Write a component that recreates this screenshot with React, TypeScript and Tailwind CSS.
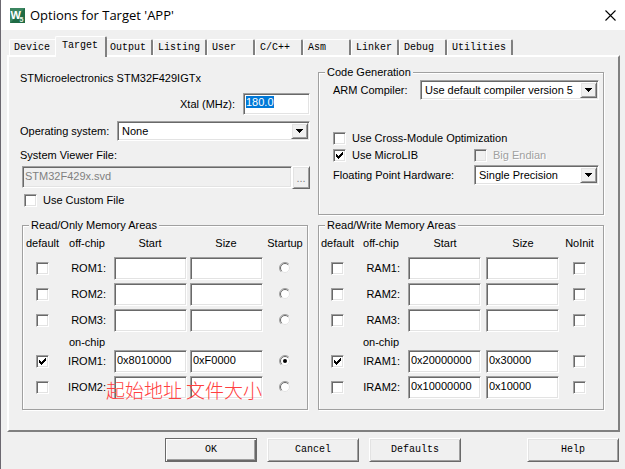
import { useEffect, useRef } from 'react';
import type { InputHTMLAttributes, ReactNode } from 'react';

const SUNKEN =
  'border border-t-[#a0a0a0] border-l-[#a0a0a0] border-r-white border-b-white shadow-[inset_1px_1px_0_#696969,inset_-1px_-1px_0_#e3e3e3]';
const RAISED =
  'border border-t-white border-l-white border-r-[#696969] border-b-[#696969] shadow-[inset_1px_1px_0_#e3e3e3,inset_-1px_-1px_0_#a0a0a0]';
const MONO = "font-['Liberation_Mono',monospace] text-[10px]";

const TABS = ['Device', 'Target', 'Output', 'Listing', 'User', 'C/C++', 'Asm', 'Linker', 'Debug', 'Utilities'];

type MemoryRow = {
  name: string;
  start?: string;
  size?: string;
  enabled?: boolean;
  startup?: boolean;
  notes?: string[];
};

const ROM_OFF: MemoryRow[] = [{ name: 'ROM1' }, { name: 'ROM2' }, { name: 'ROM3' }];
const ROM_ON: MemoryRow[] = [
  { name: 'IROM1', start: '0x8010000', size: '0xF0000', enabled: true, startup: true },
  { name: 'IROM2', notes: ['起始地址', '文件大小'] },
];
const RAM_OFF: MemoryRow[] = [{ name: 'RAM1' }, { name: 'RAM2' }, { name: 'RAM3' }];
const RAM_ON: MemoryRow[] = [
  { name: 'IRAM1', start: '0x20000000', size: '0x30000', enabled: true },
  { name: 'IRAM2', start: '0x10000000', size: '0x10000' },
];

function Checkbox(props: InputHTMLAttributes<HTMLInputElement>) {
  return (
    <span className="relative inline-block h-[13px] w-[13px] shrink-0 align-middle">
      <input
        type="checkbox"
        {...props}
        className={`peer block h-[13px] w-[13px] appearance-none bg-white disabled:bg-[#f0f0f0] ${SUNKEN}`}
      />
      <svg
        viewBox="0 0 13 13"
        className="pointer-events-none absolute inset-0 hidden h-[13px] w-[13px] peer-checked:block"
        shapeRendering="crispEdges"
      >
        <path d="M3 5h1v1h1v1h1v-1h1v-1h1v-1h1v-1h1v3h-1v1h-1v1h-1v1h-1v1h-1v-1h-1v-1h-1z" />
      </svg>
    </span>
  );
}

function Radio(props: InputHTMLAttributes<HTMLInputElement>) {
  return (
    <span className="relative inline-block h-3 w-3 align-middle">
      <input type="radio" {...props} className="peer block h-3 w-3 appearance-none" />
      <svg viewBox="0 0 12 12" className="pointer-events-none absolute inset-0 h-3 w-3">
        <circle cx="6" cy="6" r="5" fill="#fff" />
        <path d="M2.1 9.9A5.5 5.5 0 0 1 9.9 2.1" fill="none" stroke="#a0a0a0" />
        <path d="M2.8 9.2A4.5 4.5 0 0 1 9.2 2.8" fill="none" stroke="#696969" />
        <path d="M9.2 2.8A4.5 4.5 0 0 1 2.8 9.2" fill="none" stroke="#e3e3e3" />
      </svg>
      <span className="pointer-events-none absolute top-1 left-1 hidden h-1 w-1 rounded-full bg-black peer-checked:block" />
    </span>
  );
}

function Select({ id, value, className }: { id: string; value: string; className: string }) {
  return (
    <div className={`relative ${className}`}>
      <select id={id} className={`block h-5 w-full appearance-none bg-white pr-5 pl-1 ${SUNKEN}`}>
        <option>{value}</option>
      </select>
      <span
        className={`pointer-events-none absolute top-0.5 right-0.5 flex h-4 w-[17px] items-center justify-center bg-[#f0f0f0] ${RAISED}`}
      >
        <svg viewBox="0 0 7 4" className="h-1 w-[7px]" shapeRendering="crispEdges">
          <path d="M0 0h7v1h-1v1h-1v1h-1v1h-1v-1h-1v-1h-1v-1h-1z" />
        </svg>
      </span>
    </div>
  );
}

function GroupBox({ title, children }: { title: string; children: ReactNode }) {
  return (
    <fieldset className="min-w-0 border border-[#a0a0a0] shadow-[1px_1px_0_#fff,inset_1px_1px_0_#fff]">
      <legend className="ml-1.5 bg-[#f0f0f0] px-0.5 leading-[14px]">{title}</legend>
      {children}
    </fieldset>
  );
}

function MemoryTable({ kind, offChip, onChip }: { kind: 'rom' | 'ram'; offChip: MemoryRow[]; onChip: MemoryRow[] }) {
  const isRom = kind === 'rom';
  const fieldCol = isRom ? 'w-[76px]' : 'w-[78px]';

  const renderRow = (row: MemoryRow) => (
    <tr key={row.name} className="h-[26px] align-top">
      <td className="pt-[5px] text-center leading-none">
        <Checkbox aria-label={`${row.name} default`} defaultChecked={row.enabled} />
      </td>
      <th scope="row" className="pt-1 pr-2 text-right font-normal whitespace-nowrap">
        {row.name}:
      </th>
      <td className="relative">
        <input
          type="text"
          aria-label={`${row.name} start`}
          defaultValue={row.start}
          className={`block h-[23px] w-[73px] bg-white px-0.5 pb-1 ${SUNKEN}`}
        />
        {row.notes && (
          <div className="pointer-events-none absolute top-1 -left-2 z-10 flex gap-1 font-['Noto_Sans_CJK_SC',sans-serif] text-[19px] leading-5 font-light whitespace-nowrap text-[#ff4040]">
            {row.notes.map((note) => (
              <span key={note}>{note}</span>
            ))}
          </div>
        )}
      </td>
      <td>
        <input
          type="text"
          aria-label={`${row.name} size`}
          defaultValue={row.size}
          className={`block h-[23px] w-[73px] bg-white px-0.5 pb-1 ${SUNKEN}`}
        />
      </td>
      <td className="pt-[5px] text-center leading-none">
        {isRom ? (
          <Radio name="startup" aria-label={`${row.name} startup`} defaultChecked={row.startup} />
        ) : (
          <Checkbox aria-label={`${row.name} NoInit`} />
        )}
      </td>
    </tr>
  );

  return (
    <table className="mt-1 mb-[7px] table-fixed border-collapse">
      <thead>
        <tr className="h-[21px] align-top">
          <th className={`font-normal ${isRom ? 'w-[39px]' : 'w-[37px]'}`}>default</th>
          <th className="w-[52px] pr-0.5 font-normal whitespace-nowrap">off-chip</th>
          <th className={`pr-1 font-normal ${fieldCol}`}>Start</th>
          <th className={`pr-1 font-normal ${fieldCol}`}>Size</th>
          <th className={`font-normal ${isRom ? 'w-[38px]' : 'w-[31px]'}`}>{isRom ? 'Startup' : 'NoInit'}</th>
        </tr>
      </thead>
      <tbody>
        {offChip.map(renderRow)}
        <tr className="h-[15px]">
          <td />
          <th className="pr-0.5 leading-[15px] font-normal whitespace-nowrap">on-chip</th>
          <td colSpan={3} />
        </tr>
        {onChip.map(renderRow)}
      </tbody>
    </table>
  );
}

function TitleBar() {
  return (
    <header className="flex h-[30px] items-center bg-white px-[9px]">
      <svg viewBox="0 0 15 15" className="mr-[5px] h-[15px] w-[15px]">
        <rect width="15" height="15" fill="#1f6b45" />
        <path d="M0 0h15L0 15z" fill="#3b8560" />
        <text x="0.5" y="10.5" fontSize="11" fontWeight="700" fontFamily="Liberation Sans" fill="#fff">
          W
        </text>
        <text x="9.5" y="14" fontSize="7" fontWeight="700" fontFamily="Liberation Sans" fill="#e6f3ec">
          5
        </text>
      </svg>
      <h1 className="font-['Open_Sans',sans-serif] text-[13px]">Options for Target 'APP'</h1>
      <button aria-label="Close" className="ml-auto">
        <svg viewBox="0 0 11 11" className="h-[11px] w-[11px]" stroke="#000" strokeWidth="1.1">
          <path d="M.5.5l10 10M10.5.5l-10 10" />
        </svg>
      </button>
    </header>
  );
}

export default function App() {
  const xtalRef = useRef<HTMLInputElement>(null);

  useEffect(() => {
    xtalRef.current?.focus();
    xtalRef.current?.select();
  }, []);

  return (
    <div className="min-h-screen border-b border-l border-b-[#56605c] border-l-[#6b6870] bg-[#f0f0f0] font-['Liberation_Sans',sans-serif] text-[11px] leading-[14px] text-black">
      <TitleBar />

      <main className="pt-1.5 pr-[5px] pb-[7px] pl-1.5">
        <div role="tablist" className={`flex h-[19px] items-end pl-0.5 ${MONO}`}>
          {TABS.map((tab) => {
            const active = tab === 'Target';
            return (
              <button
                key={tab}
                role="tab"
                aria-selected={active}
                className={`rounded-t-[2px] border-t border-r-2 border-l border-t-white border-r-[#808080] border-l-white text-left leading-[15px] ${
                  active
                    ? 'relative z-10 -mx-0.5 -mb-0.5 h-[21px] min-w-[52px] bg-[#f0f0f0] pr-1.5 pb-1 pl-1.5'
                    : 'h-4 min-w-12 pr-[5px] pl-1'
                }`}
              >
                {tab}
              </button>
            );
          })}
        </div>

        <section className="border-2 border-t-white border-r-[#808080] border-b-[#808080] border-l-white pt-2 pr-[14px] pb-5 pl-[13px]">
          <div className="grid grid-cols-2 gap-x-2.5 gap-y-[3px]">
            <div className="-mx-0.5 flex flex-col">
              <p className="mt-1.5">STMicroelectronics STM32F429IGTx</p>
              <div className="mt-2 flex items-center justify-end gap-2">
                <label htmlFor="xtal">Xtal (MHz):</label>
                <input
                  id="xtal"
                  ref={xtalRef}
                  type="text"
                  defaultValue="180.0"
                  className={`h-[22px] w-[67px] bg-white px-0.5 pb-1 outline-none selection:bg-[#0078d7] selection:text-white ${SUNKEN}`}
                />
              </div>
              <div className="mt-1.5 flex items-center">
                <label htmlFor="os" className="w-[97px]">
                  Operating system:
                </label>
                <Select id="os" value="None" className="flex-1" />
              </div>
              <label htmlFor="svd" className="mt-[7px]">
                System Viewer File:
              </label>
              <div className="mt-1 flex pl-0.5">
                <input
                  id="svd"
                  type="text"
                  disabled
                  defaultValue="STM32F429x.svd"
                  className={`h-[22px] min-w-0 flex-1 bg-[#f0f0f0] px-0.5 pb-0.5 text-[#808080] ${SUNKEN}`}
                />
                <button disabled aria-label="Browse" className={`h-[23px] w-[18px] text-[#808080] ${RAISED}`}>
                  ...
                </button>
              </div>
              <label className="mt-1 flex items-center gap-1.5 pl-1">
                <Checkbox />
                Use Custom File
              </label>
            </div>

            <GroupBox title="Code Generation">
              <div className="pt-px pr-1 pb-[29px] pl-3.5">
                <div className="flex items-center justify-between">
                  <label htmlFor="compiler">ARM Compiler:</label>
                  <Select id="compiler" value="Use default compiler version 5" className="w-[179px]" />
                </div>
                <label className="mt-[31px] flex items-center gap-1.5">
                  <Checkbox />
                  Use Cross-Module Optimization
                </label>
                <div className="mt-[3px] flex items-center justify-between">
                  <label className="flex items-center gap-1.5">
                    <Checkbox defaultChecked />
                    Use MicroLIB
                  </label>
                  <label className="flex w-[125px] items-center gap-1.5 text-[#a0a0a0] [text-shadow:1px_1px_0_#fff]">
                    <Checkbox disabled />
                    Big Endian
                  </label>
                </div>
                <div className="mt-[3px] flex items-center justify-between">
                  <label htmlFor="fpu">Floating Point Hardware:</label>
                  <Select id="fpu" value="Single Precision" className="w-[125px]" />
                </div>
              </div>
            </GroupBox>

            <GroupBox title="Read/Only Memory Areas">
              <MemoryTable kind="rom" offChip={ROM_OFF} onChip={ROM_ON} />
            </GroupBox>
            <GroupBox title="Read/Write Memory Areas">
              <MemoryTable kind="ram" offChip={RAM_OFF} onChip={RAM_ON} />
            </GroupBox>
          </div>
        </section>

        <div className={`mt-1.5 flex gap-2.5 pr-px ${MONO}`}>
          <button className="ml-auto h-6 w-[92px] border border-[#696969] shadow-[inset_1px_1px_0_#fff,inset_-1px_-1px_0_#696969,inset_-2px_-2px_0_#a0a0a0]">
            OK
          </button>
          <button className={`h-6 w-[92px] ${RAISED}`}>Cancel</button>
          <button className={`h-6 w-[92px] ${RAISED}`}>Defaults</button>
          <button className={`ml-14 h-6 w-[92px] ${RAISED}`}>Help</button>
        </div>
      </main>
    </div>
  );
}
